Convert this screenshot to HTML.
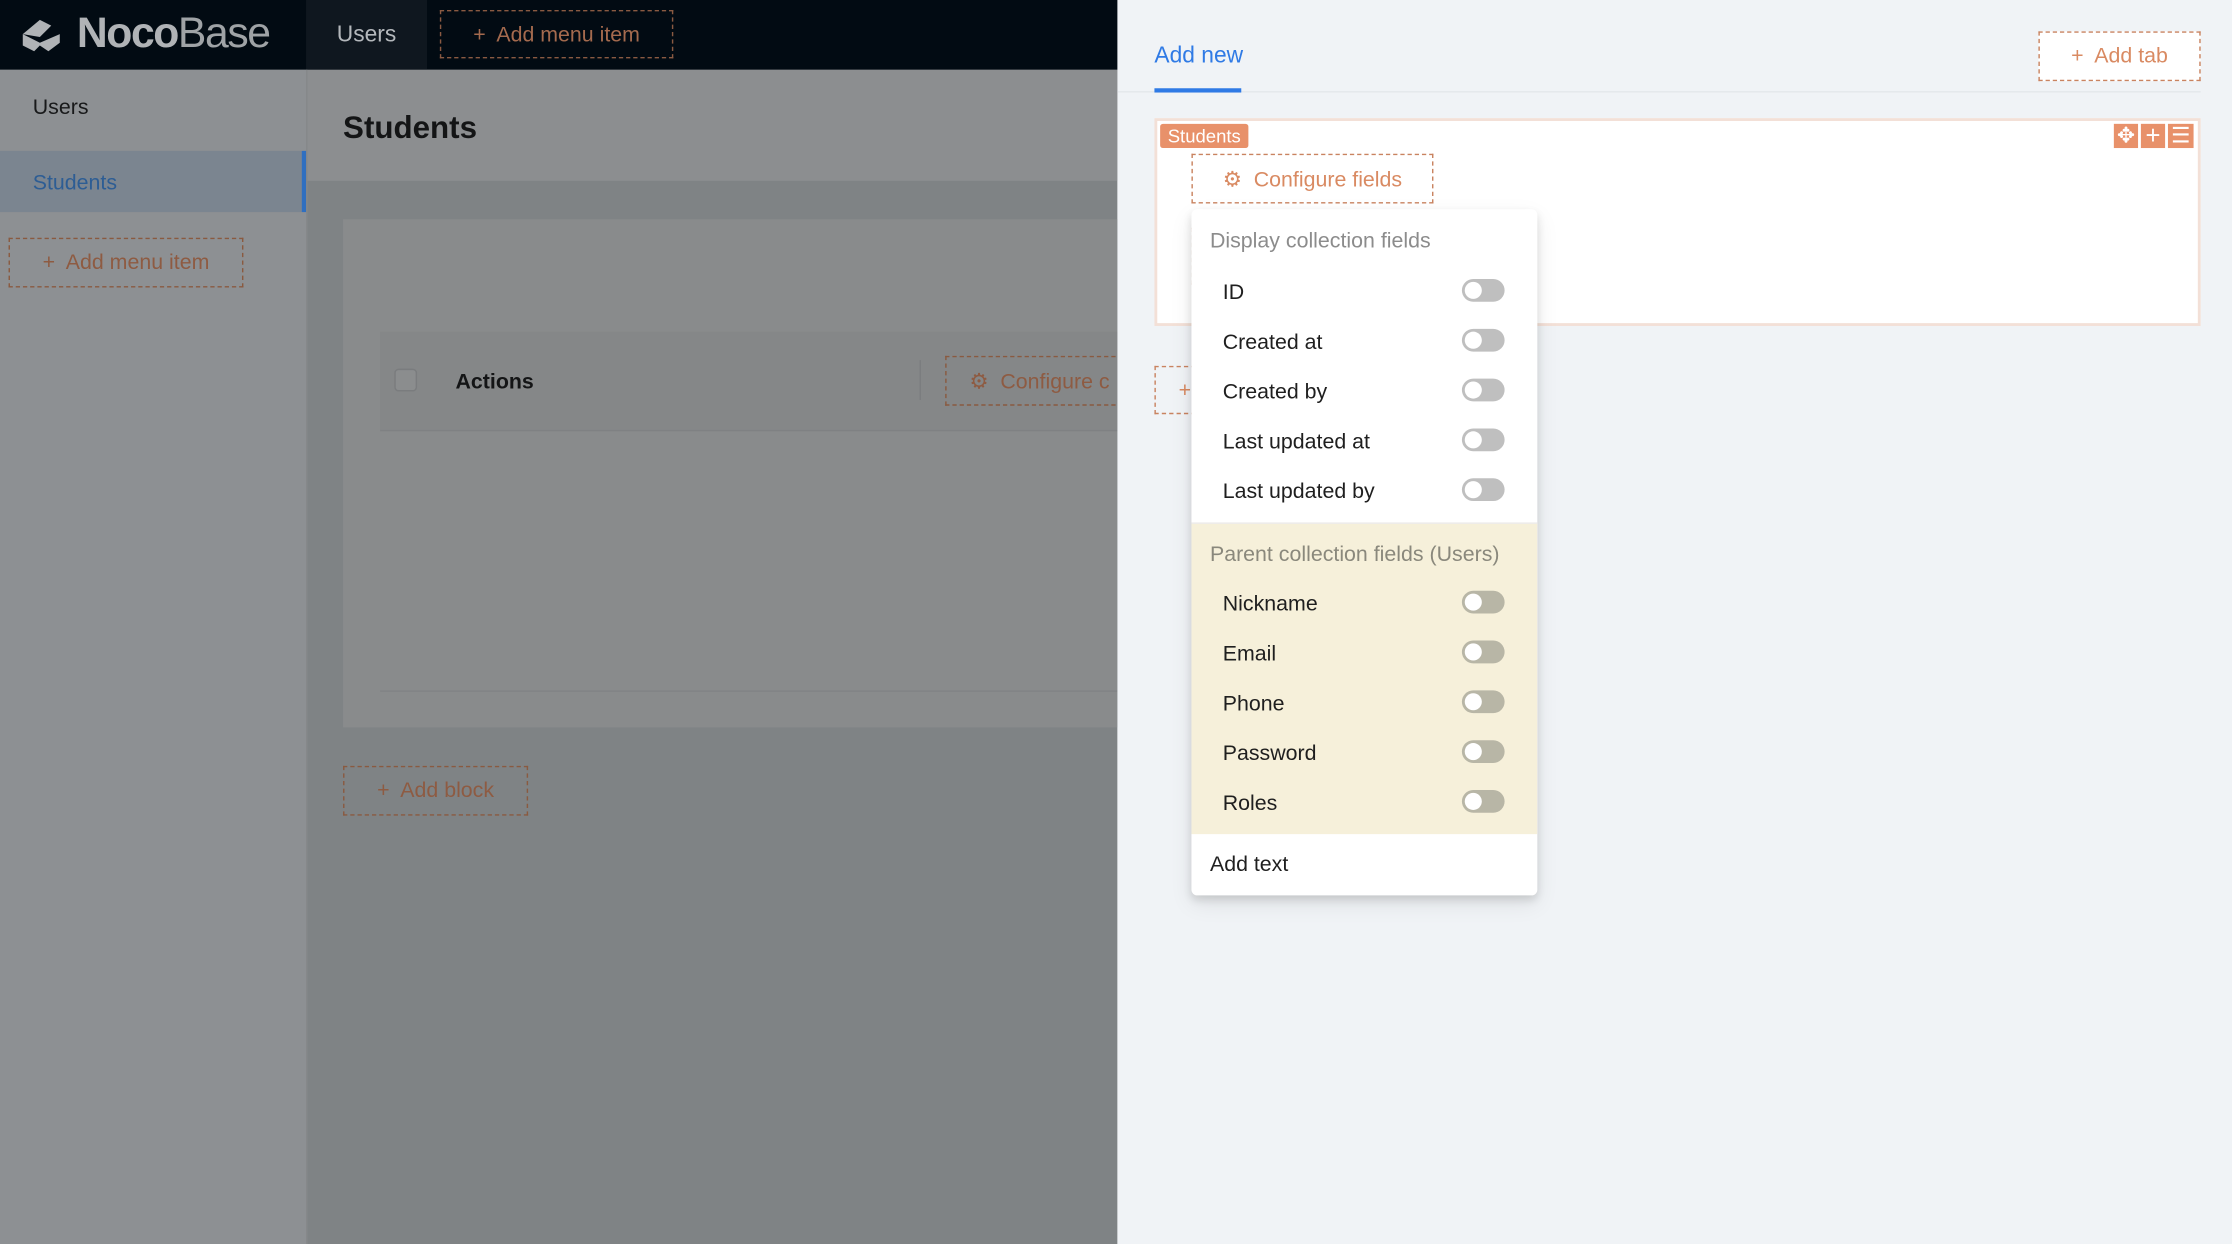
<!DOCTYPE html>
<html><head><meta charset="utf-8"><style>
html,body{margin:0;padding:0;width:2232px;height:1244px;overflow:hidden;background:#f0f3f6}
#w{position:absolute;left:0;top:0;width:1568px;height:874px;transform:scale(1.42347);transform-origin:0 0;font-family:"Liberation Sans",Arial,sans-serif;font-size:15px;color:#1f1f1f}
.a{position:absolute}
.dash{position:absolute;border:1px dashed #c98360;box-sizing:border-box;color:#d98a62;display:flex;align-items:center;justify-content:center;font-size:15px}
.tg{position:absolute;left:190px;width:30px;height:16px;border-radius:8px;background:#bfbfbf}
.tg:after{content:"";position:absolute;left:2px;top:2px;width:12px;height:12px;border-radius:50%;background:#fff}
.y .tg{background:#b8b6a6}
.it{position:absolute;left:0;width:243px;height:35px}
.it span{position:absolute;left:22px;top:10px}
</style></head><body><div id="w">
<div class="a" style="left:0;top:0;width:785px;height:874px;background:#7f8385"></div>
<div class="a" style="left:0;top:0;width:785px;height:49px;background:#020b13"></div>
<div class="a" style="left:215px;top:0;width:85px;height:49px;background:#0f171f;color:#b4b8bc;line-height:49px;text-align:center;font-size:16px">Users</div>
<div class="a" style="left:14px;top:10px;width:32px;height:28px">
<svg width="32" height="28" viewBox="0 0 32 28"><path d="M2 14 L14 4 L22 8 L14 16 Z" fill="#b0b3b6"/><path d="M2 14 L2 22 L10 26 L14 22 L20 26 L28 20 L28 14 L14 20 Z" fill="#b0b3b6"/></svg></div>
<div class="a" style="left:54px;top:7px;font-size:30px;color:#b0b3b6;letter-spacing:-1px"><b style="font-weight:900">Noco</b><span style="font-weight:300;color:#9fa3a6">Base</span></div>
<div class="dash" style="left:309px;top:7px;width:164px;height:34px;color:#a46a4e;border-color:#8a5a42">+&nbsp; Add menu item</div>
<div class="a" style="left:0;top:49px;width:215px;height:825px;background:#8d9093;border-right:1px solid #85888a"></div>
<div class="a" style="left:23px;top:67px;font-size:15px;color:#18191a">Users</div>
<div class="a" style="left:0;top:106px;width:212px;height:43px;background:#7b8590"></div>
<div class="a" style="left:212px;top:106px;width:3px;height:43px;background:#2f6fc0"></div>
<div class="a" style="left:23px;top:120px;font-size:15px;color:#2d5d94">Students</div>
<div class="dash" style="left:6px;top:167px;width:165px;height:35px;color:#8e5b42;border-color:#8a5a40">+&nbsp; Add menu item</div>
<div class="a" style="left:216px;top:49px;width:569px;height:78px;background:#8c8e90"></div>
<div class="a" style="left:241px;top:77px;font-size:22px;font-weight:bold;color:#141516">Students</div>
<div class="a" style="left:241px;top:154px;width:544px;height:357px;background:#898b8c"></div>
<div class="a" style="left:267px;top:233px;width:518px;height:69px;background:#858788"></div>
<div class="a" style="left:267px;top:302px;width:518px;height:1px;background:#7f8183"></div>
<div class="a" style="left:267px;top:485px;width:518px;height:1px;background:#818385"></div>
<div class="a" style="left:277px;top:259px;width:16px;height:16px;border:1px solid #7a7c7e;border-radius:3px;box-sizing:border-box;background:#8b8d8e"></div>
<div class="a" style="left:320px;top:260px;font-weight:bold;color:#141516">Actions</div>
<div class="a" style="left:646px;top:253px;width:1px;height:28px;background:#7b7d7f"></div>
<div class="dash" style="left:664px;top:250px;width:140px;height:35px;justify-content:flex-start;padding-left:16px;color:#8e5b42;border-color:#8a5a40">⚙&nbsp; Configure c</div>
<div class="dash" style="left:241px;top:538px;width:130px;height:35px;color:#8e5b42;border-color:#8a5a40">+&nbsp; Add block</div>
<div class="a" style="left:785px;top:0;width:783px;height:874px;background:#f0f3f6"></div>
<div class="a" style="left:811px;top:31px;font-size:16px;color:#2f7ae5">Add new</div>
<div class="a" style="left:785px;top:64px;width:761px;height:1px;background:#e4e8ec"></div>
<div class="a" style="left:811px;top:62px;width:61px;height:3px;background:#2f7ae5"></div>
<div class="dash" style="left:1432px;top:22px;width:114px;height:35px;background:#fff">+&nbsp; Add tab</div>
<div class="a" style="left:811px;top:83px;width:735px;height:146px;border:2px solid #f3e0d7;box-sizing:border-box;background:#fff"></div>
<div class="a" style="left:815px;top:87px;width:62px;height:17px;background:#e8916a;color:#fff;font-size:13px;line-height:17px;text-align:center;border-radius:2px">Students</div>
<div class="a" style="left:1485px;top:87px;width:17px;height:17px;background:#e8916a;color:#fff;font-size:15px;line-height:17px;text-align:center">✥</div>
<div class="a" style="left:1504px;top:87px;width:17px;height:17px;background:#e8916a;color:#fff;font-size:18px;line-height:17px;text-align:center">+</div>
<div class="a" style="left:1523px;top:87px;width:18px;height:17px;background:#e8916a;color:#fff;font-size:15px;line-height:17px;text-align:center">☰</div>
<div class="dash" style="left:837px;top:108px;width:170px;height:35px;background:#fff">⚙&nbsp; Configure fields</div>
<div class="dash" style="left:837px;top:160px;width:60px;height:40px;background:#fff;border-right:none"></div>
<div class="dash" style="left:811px;top:257px;width:60px;height:34px;justify-content:flex-start;padding-left:16px">+</div>
<div class="a" style="left:837px;top:147px;width:243px;height:482px;background:#fff;border-radius:4px;box-shadow:0 6px 16px rgba(0,0,0,.08),0 3px 6px rgba(0,0,0,.12);overflow:hidden">
<div class="a" style="left:13px;top:14px;color:#8c8c8c">Display collection fields</div>
<div class="it" style="top:40px"><span>ID</span><div class="tg" style="top:9px"></div></div>
<div class="it" style="top:75px"><span>Created at</span><div class="tg" style="top:9px"></div></div>
<div class="it" style="top:110px"><span>Created by</span><div class="tg" style="top:9px"></div></div>
<div class="it" style="top:145px"><span>Last updated at</span><div class="tg" style="top:9px"></div></div>
<div class="it" style="top:180px"><span>Last updated by</span><div class="tg" style="top:9px"></div></div>
<div class="a y" style="left:0;top:220px;width:243px;height:218px;background:#f6f0da;border-top:1px solid #ececec">
<div class="a" style="left:13px;top:13px;color:#8a887c">Parent collection fields (Users)</div>
<div class="it" style="top:38px"><span>Nickname</span><div class="tg" style="top:9px"></div></div>
<div class="it" style="top:73px"><span>Email</span><div class="tg" style="top:9px"></div></div>
<div class="it" style="top:108px"><span>Phone</span><div class="tg" style="top:9px"></div></div>
<div class="it" style="top:143px"><span>Password</span><div class="tg" style="top:9px"></div></div>
<div class="it" style="top:178px"><span>Roles</span><div class="tg" style="top:9px"></div></div>
</div>
<div class="a" style="left:13px;top:452px">Add text</div>
</div>
</div></body></html>
